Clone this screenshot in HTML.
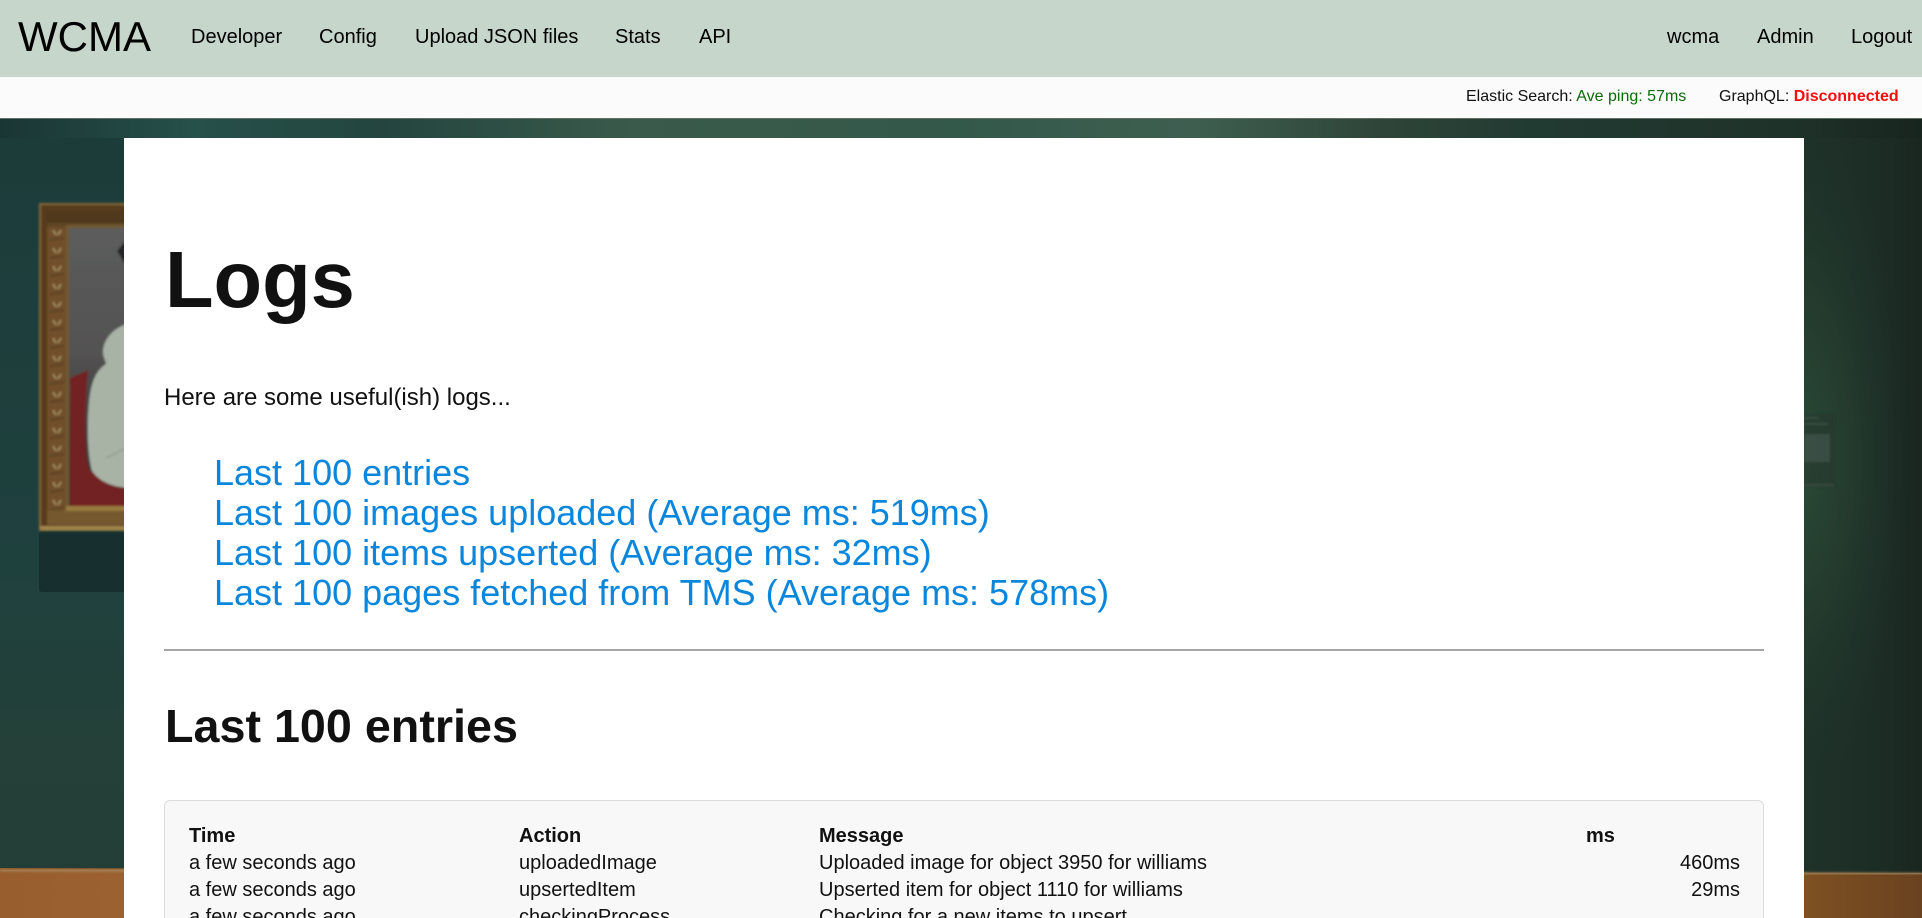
<!DOCTYPE html>
<html lang="en">
<head>
<meta charset="utf-8">
<title>WCMA - Logs</title>
<style>
html,body{margin:0;padding:0;width:1922px;height:918px;overflow:hidden;background:#1f3f3a;font-family:"Liberation Sans",Arial,sans-serif;color:#111}
a{text-decoration:none;color:inherit}
#bg{position:absolute;left:0;top:118px;width:1922px;height:800px;display:block}
nav{position:absolute;left:0;top:0;width:1922px;height:77px;background:#c6d6ca;color:#000}
nav a{position:absolute;top:26px;font-size:20px;line-height:23px;white-space:nowrap}
nav a.brand{left:18px;top:13px;font-size:42px;line-height:48px}
#status{position:absolute;left:0;top:77px;width:1922px;height:41px;background:#fbfbfb;font-size:16px;line-height:18px;color:#111}
#status span{position:absolute;top:11px;white-space:nowrap}
.g{color:#0a6b0a}.r{color:#f60d0d;font-weight:bold}
main{position:absolute;left:124px;top:138px;width:1680px;height:780px;background:#fff;overflow:hidden}
h1{position:absolute;left:41px;top:96px;margin:0;font-size:79.5px;line-height:92px;font-weight:bold;color:#111}
p{position:absolute;left:40px;top:247px;margin:0;font-size:24px;line-height:26px;color:#111}
ul{position:absolute;left:90px;top:315px;margin:0;padding:0;list-style:none;font-size:36px;line-height:40px;color:#0a87dc;white-space:nowrap}
hr{position:absolute;left:40px;top:511px;width:1600px;margin:0;border:0;height:2px;background:#a5a5a5}
h2{position:absolute;left:41px;top:560px;margin:0;font-size:46.7px;line-height:56px;font-weight:bold;color:#111}
#box{position:absolute;left:40px;top:662px;width:1598px;height:140px;background:#f8f8f8;border:1px solid #dcdcdc;border-radius:6px;box-sizing:content-box}
table{position:absolute;left:24px;top:22px;width:1551px;border-collapse:collapse;table-layout:fixed;font-size:20px;line-height:27px;color:#111}
th,td{padding:0;text-align:left;white-space:nowrap;font-weight:normal}
th{font-weight:bold}
td.n{text-align:right}
</style>
</head>
<body>
<svg id="bg" viewBox="0 0 1922 800" preserveAspectRatio="none" xmlns="http://www.w3.org/2000/svg">
  <defs>
    <linearGradient id="wall" x1="0" x2="1" y1="0" y2="0">
      <stop offset="0" stop-color="#1a3634"/>
      <stop offset=".04" stop-color="#1f403d"/>
      <stop offset=".1" stop-color="#26504a"/>
      <stop offset=".2" stop-color="#24453f"/>
      <stop offset=".33" stop-color="#3a5a4b"/>
      <stop offset=".5" stop-color="#33594a"/>
      <stop offset=".62" stop-color="#3e5f50"/>
      <stop offset=".72" stop-color="#2e4438"/>
      <stop offset=".8" stop-color="#213a32"/>
      <stop offset=".93" stop-color="#1f3229"/>
      <stop offset="1" stop-color="#18251f"/>
    </linearGradient>
    <radialGradient id="glow" gradientUnits="userSpaceOnUse" cx="1800" cy="340" r="1" gradientTransform="translate(1800 340) scale(110 340) translate(-1800 -340)">
      <stop offset="0" stop-color="#2a4a37"/>
      <stop offset=".5" stop-color="#243c2e" stop-opacity=".8"/>
      <stop offset="1" stop-color="#1f3229" stop-opacity="0"/>
    </radialGradient>
    <linearGradient id="rightBase" x1="0" x2="1" y1="0" y2="0">
      <stop offset="0" stop-color="#1f3229"/>
      <stop offset=".7" stop-color="#1c2c25"/>
      <stop offset="1" stop-color="#1a2620"/>
    </linearGradient>
    <linearGradient id="leftW" x1="0" x2="0" y1="0" y2="1">
      <stop offset="0" stop-color="#1c3c3a"/>
      <stop offset=".55" stop-color="#1f413e"/>
      <stop offset=".8" stop-color="#244038"/>
      <stop offset="1" stop-color="#233c37"/>
    </linearGradient>
    <linearGradient id="wood" x1="0" x2="1" y1="0" y2="0">
      <stop offset="0" stop-color="#985e2e"/>
      <stop offset=".06" stop-color="#9c6130"/>
      <stop offset=".94" stop-color="#7e5022"/>
      <stop offset="1" stop-color="#6a4220"/>
    </linearGradient>
    <linearGradient id="gray" x1="0" x2="0" y1="0" y2="1">
      <stop offset="0" stop-color="#5c5d5d"/>
      <stop offset=".45" stop-color="#535252"/>
      <stop offset=".75" stop-color="#3b3a3a"/>
      <stop offset="1" stop-color="#3a3838"/>
    </linearGradient>
    <pattern id="orn" width="20" height="18" patternUnits="userSpaceOnUse" x="47" y="216">
      <rect width="20" height="18" fill="#6f5029"/>
      <path d="M6 4l3 5M14 4l-3 5" stroke="#a38d60" stroke-width="1.8"/>
      <path d="M3 14l14 -2" stroke="#54391c" stroke-width="2" opacity=".6"/>
    </pattern>
    <filter id="b1"><feGaussianBlur stdDeviation="1"/></filter>
    <filter id="b2"><feGaussianBlur stdDeviation="1.8"/></filter>
  </defs>
  <rect width="1922" height="800" fill="url(#wall)"/>
  <rect x="0" y="20" width="124" height="780" fill="url(#leftW)"/>
  <rect x="1804" y="20" width="118" height="780" fill="url(#rightBase)"/>
  <rect x="1700" y="20" width="222" height="740" fill="url(#glow)"/>
  <rect x="0" y="0" width="1922" height="1" fill="#5f6f66"/>

  <!-- shadow under frame -->
  <rect x="39" y="413" width="90" height="61" rx="3" fill="#17302f"/>

  <!-- frame -->
  <g filter="url(#b1)">
    <rect x="39" y="85" width="90" height="328" fill="#84683a"/>
    <rect x="41" y="87" width="90" height="324" fill="#573a1c"/>
    <rect x="47" y="93" width="90" height="314" fill="url(#orn)"/>
    <rect x="47" y="93" width="90" height="12" fill="#4f371e"/>
    <rect x="47" y="105" width="90" height="4" fill="#5f4722"/>
    <rect x="47" y="392" width="90" height="15" fill="#75582e"/>
    <rect x="66" y="107" width="70" height="285" fill="#6f5a32"/>
    <rect x="69" y="110" width="60" height="278" fill="url(#gray)"/>
    <path d="M70 260L88 252C84 300 84 340 90 353L130 372V388H70Z" fill="#722024"/>
    <path d="M130 207L124 207C112 212 103 222 103 235C104 241 106 244 106 246C97 252 91 262 89 285C87 305 87 335 92 353C100 364 112 369 130 370Z" fill="#a8b3a6"/>
    <path d="M106 340L126 330" stroke="#8c968b" stroke-width="2" fill="none" opacity=".6"/>
    <path d="M126 122L117 133L126 148L130 148V122Z" fill="#25282a"/>
    <rect x="66" y="388" width="70" height="5" fill="#977c3e"/>
    <rect x="40" y="408" width="90" height="4" fill="#a08548"/>
  </g>

  <!-- wall label at right -->
  <g filter="url(#b1)">
    <rect x="1804" y="296" width="31" height="73" fill="#2a382e" opacity=".6"/>
    <rect x="1804" y="316" width="26" height="28" fill="#53645a" opacity=".45"/>
    <g stroke="#6a7b6e" stroke-width="1" opacity=".4">
      <path d="M1804 300h14M1804 306h24M1804 367h30"/>
    </g>
  </g>

  <!-- skirting -->
  <path d="M0 750L1922 755V800H0Z" fill="url(#wood)"/>
  <path d="M0 752L1922 756" stroke="#a98f63" stroke-width="3" fill="none" filter="url(#b1)" opacity=".75"/>
</svg>

<nav>
  <a class="brand" href="#">WCMA</a>
  <a href="#" style="left:191px">Developer</a>
  <a href="#" style="left:319px">Config</a>
  <a href="#" style="left:415px">Upload JSON files</a>
  <a href="#" style="left:615px">Stats</a>
  <a href="#" style="left:699px">API</a>
  <a href="#" style="left:1667px">wcma</a>
  <a href="#" style="left:1757px">Admin</a>
  <a href="#" style="left:1851px">Logout</a>
</nav>

<div id="status">
  <span style="left:1466px">Elastic Search: <b class="g" style="font-weight:normal">Ave ping: 57ms</b></span>
  <span style="left:1719px">GraphQL: <b class="r">Disconnected</b></span>
</div>

<main>
  <h1>Logs</h1>
  <p>Here are some useful(ish) logs...</p>
  <ul>
    <li><a href="#">Last 100 entries</a></li>
    <li><a href="#">Last 100 images uploaded (Average ms: 519ms)</a></li>
    <li><a href="#">Last 100 items upserted (Average ms: 32ms)</a></li>
    <li><a href="#">Last 100 pages fetched from TMS (Average ms: 578ms)</a></li>
  </ul>
  <hr>
  <h2>Last 100 entries</h2>
  <div id="box">
    <table>
      <colgroup><col style="width:330px"><col style="width:300px"><col style="width:767px"><col style="width:154px"></colgroup>
      <tr><th>Time</th><th>Action</th><th>Message</th><th>ms</th></tr>
      <tr><td>a few seconds ago</td><td>uploadedImage</td><td>Uploaded image for object 3950 for williams</td><td class="n">460ms</td></tr>
      <tr><td>a few seconds ago</td><td>upsertedItem</td><td>Upserted item for object 1110 for williams</td><td class="n">29ms</td></tr>
      <tr><td>a few seconds ago</td><td>checkingProcess</td><td>Checking for a new items to upsert</td><td class="n"></td></tr>
    </table>
  </div>
</main>
</body>
</html>
